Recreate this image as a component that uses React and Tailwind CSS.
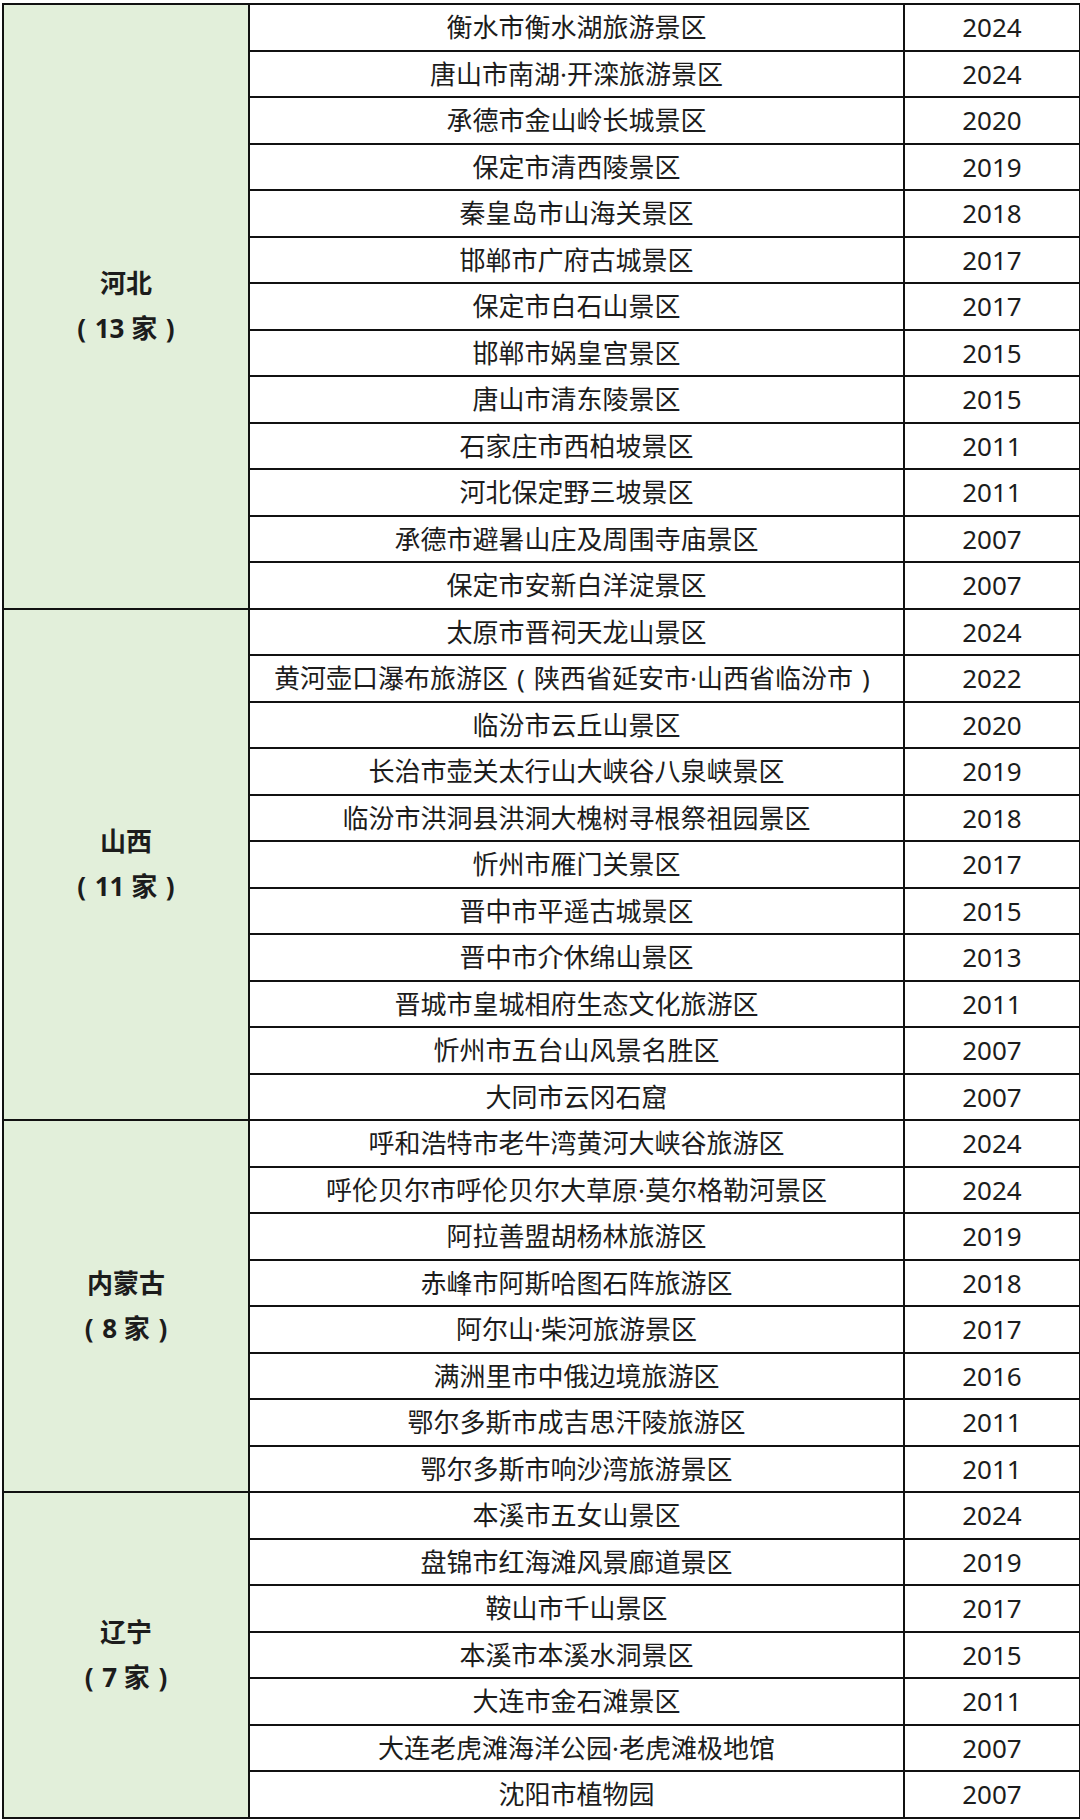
const groups = [
  {
    name: '河北',
    count: '13 家',
    rows: [
      ['衡水市衡水湖旅游景区', '2024'],
      ['唐山市南湖·开滦旅游景区', '2024'],
      ['承德市金山岭长城景区', '2020'],
      ['保定市清西陵景区', '2019'],
      ['秦皇岛市山海关景区', '2018'],
      ['邯郸市广府古城景区', '2017'],
      ['保定市白石山景区', '2017'],
      ['邯郸市娲皇宫景区', '2015'],
      ['唐山市清东陵景区', '2015'],
      ['石家庄市西柏坡景区', '2011'],
      ['河北保定野三坡景区', '2011'],
      ['承德市避暑山庄及周围寺庙景区', '2007'],
      ['保定市安新白洋淀景区', '2007'],
    ],
  },
  {
    name: '山西',
    count: '11 家',
    rows: [
      ['太原市晋祠天龙山景区', '2024'],
      ['黄河壶口瀑布旅游区|陕西省延安市·山西省临汾市', '2022'],
      ['临汾市云丘山景区', '2020'],
      ['长治市壶关太行山大峡谷八泉峡景区', '2019'],
      ['临汾市洪洞县洪洞大槐树寻根祭祖园景区', '2018'],
      ['忻州市雁门关景区', '2017'],
      ['晋中市平遥古城景区', '2015'],
      ['晋中市介休绵山景区', '2013'],
      ['晋城市皇城相府生态文化旅游区', '2011'],
      ['忻州市五台山风景名胜区', '2007'],
      ['大同市云冈石窟', '2007'],
    ],
  },
  {
    name: '内蒙古',
    count: '8 家',
    rows: [
      ['呼和浩特市老牛湾黄河大峡谷旅游区', '2024'],
      ['呼伦贝尔市呼伦贝尔大草原·莫尔格勒河景区', '2024'],
      ['阿拉善盟胡杨林旅游区', '2019'],
      ['赤峰市阿斯哈图石阵旅游区', '2018'],
      ['阿尔山·柴河旅游景区', '2017'],
      ['满洲里市中俄边境旅游区', '2016'],
      ['鄂尔多斯市成吉思汗陵旅游区', '2011'],
      ['鄂尔多斯市响沙湾旅游景区', '2011'],
    ],
  },
  {
    name: '辽宁',
    count: '7 家',
    rows: [
      ['本溪市五女山景区', '2024'],
      ['盘锦市红海滩风景廊道景区', '2019'],
      ['鞍山市千山景区', '2017'],
      ['本溪市本溪水洞景区', '2015'],
      ['大连市金石滩景区', '2011'],
      ['大连老虎滩海洋公园·老虎滩极地馆', '2007'],
      ['沈阳市植物园', '2007'],
    ],
  },
];

// full-width brackets drawn centred in a 1em box, as in the source table
const Bracketed = ({ children }) => (
  <>
    <span className="inline-block w-[1em] text-center">(</span>
    {children}
    <span className="inline-block w-[1em] text-center">)</span>
  </>
);

const PlaceName = ({ text }) => {
  const [main, note] = text.split('|');
  if (!note) return main;
  return (
    <>
      {main}
      <Bracketed>{note}</Bracketed>
    </>
  );
};

const App = () => {
  return (
    <div className="min-h-[1820px] w-[1080px] bg-white pl-[2px] pt-[3px] font-['Noto_Sans','Noto_Sans_CJK_SC',sans-serif] text-[26px] text-[#1c1c1c]">
      <table className="w-[1077px] table-fixed border-collapse">
        <colgroup>
          <col className="w-[246px]" />
          <col className="w-[655px]" />
          <col className="w-[176px]" />
        </colgroup>
        <tbody>
          {groups.map((group) =>
            group.rows.map(([name, year], i) => (
              <tr key={group.name + i} className="h-[46.5px]">
                {i === 0 && (
                  <td
                    rowSpan={group.rows.length}
                    className="border-2 border-[#111] bg-[#e2efda] text-center align-middle font-bold leading-[45px]"
                  >
                    <div>{group.name}</div>
                    <div>
                      <Bracketed>{group.count}</Bracketed>
                    </div>
                  </td>
                )}
                <td className="whitespace-nowrap border-2 border-[#111] p-0 text-center leading-none">
                  <PlaceName text={name} />
                </td>
                <td className="border-2 border-[#111] p-0 text-center leading-none">{year}</td>
              </tr>
            ))
          )}
        </tbody>
      </table>
    </div>
  );
};

export default App;
